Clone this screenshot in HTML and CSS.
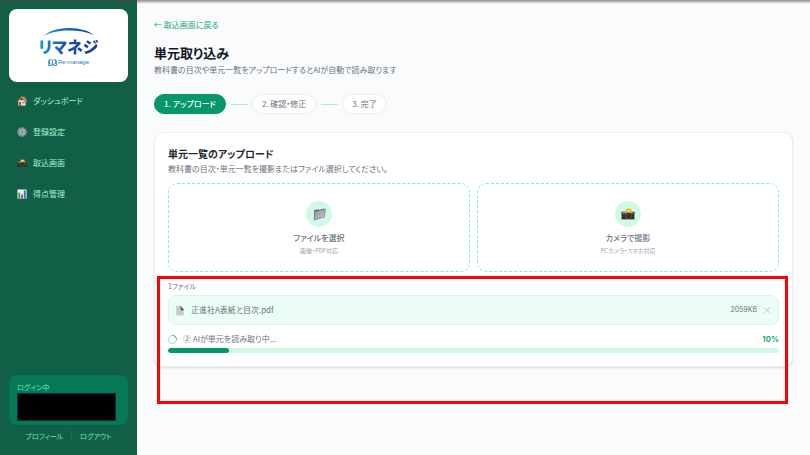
FILE: index.html
```html
<!DOCTYPE html>
<html lang="ja">

<head>
    <meta charset="UTF-8">
    <meta name="viewport" content="width=device-width, initial-scale=1.0">
    <title>単元取り込み</title>
    <link rel="stylesheet" href="styles.css">
</head>

<body>
    <!-- shared icons -->
    <svg class="defs" width="0" height="0" aria-hidden="true">
        <linearGradient id="blue" x1="0" x2="1" y1="0" y2="0">
            <stop offset="0" stop-color="#1696d2" />
            <stop offset="1" stop-color="#173a94" />
        </linearGradient>
        <linearGradient id="steel" x1="0" x2="1" y1="0" y2="1">
            <stop offset="0" stop-color="#8d939d" />
            <stop offset="1" stop-color="#c3c7ce" />
        </linearGradient>
        <symbol id="camera" viewBox="0 0 26 22">
            <path d="M1 7h24v14H1z" fill="#34302f" />
            <path d="M1 7h24v4H1z" fill="#5b5654" />
            <path d="M9 7l2-5h6l2 5z" fill="#4a4543" />
            <path d="M14 0l2 3 4-1-1 4 3 2-5 1-3 2-3-2-4-1 3-3-1-3 4 1z" fill="#ffb31a" />
            <circle cx="14" cy="5" r="2" fill="#fff0a0" />
            <circle cx="14" cy="14" r="6" fill="#55504f" />
            <circle cx="14" cy="14" r="4" fill="#24252b" />
            <circle cx="13" cy="13" r="1" fill="#8d96ac" />
            <path d="M3 8h4v2H3z" fill="#a39c98" />
        </symbol>
    </svg>

    <div class="layout">
        <aside class="sidebar">
            <div class="logo">
                <svg class="logo-arc" viewBox="0 0 52 8" aria-hidden="true">
                    <path d="M1 8C10-2 38-3 51 7C36 1 14 1 1 8z" fill="url(#blue)" />
                </svg>
                <span class="logo-name">リマネジ</span>
                <span class="logo-sub">
                    <svg class="logo-book" viewBox="0 0 18 14" aria-hidden="true">
                        <path d="M9 3C7 1 4 1 3 1v9c3 0 5 0 6 2c1-2 3-2 6-2V1c-1 0-4 0-6 2zM9 3v9M3 3H1v10h7M15 3h2v10h-7" fill="none" stroke="#217dbe" stroke-width="1.5" />
                    </svg>
                    Re:manage
                </span>
            </div>

            <nav>
                <ul class="menu">
                    <li>
                        <a href="#">
                            <svg class="menu-icon" viewBox="0 0 22 22" aria-hidden="true">
                                <path d="M3 9h16v12H3z" fill="#f6e6c4" />
                                <path d="M15 1h4v8h-4z" fill="#a65039" />
                                <path d="M0 11L9 1l12 10-2 2-10-8-7 8z" fill="#d0553f" />
                                <path d="M9 1l4 0 9 9-1 2z" fill="#e9a184" />
                                <path d="M5 13h4v8H5z" fill="#8c4a30" />
                                <path d="M12 12h5v5h-5z" fill="#6aa7ce" />
                            </svg>
                            ダッシュボード
                        </a>
                    </li>
                    <li>
                        <a href="#">
                            <svg class="menu-icon" viewBox="0 0 22 22" aria-hidden="true">
                                <circle cx="11" cy="11" r="9" fill="none" stroke="#a9adb8" stroke-width="3" stroke-dasharray="3 1.7" />
                                <circle cx="11" cy="11" r="7" fill="#777c88" stroke="#b6bac4" stroke-width="2" />
                                <path d="M11 4v14M4 11h14M6 6l10 10M16 6L6 16" stroke="#b6bac4" stroke-width="1" />
                                <circle cx="11" cy="11" r="3" fill="#50545e" stroke="#c9ccd4" stroke-width="2" />
                            </svg>
                            登録設定
                        </a>
                    </li>
                    <li>
                        <a href="#">
                            <svg class="menu-icon" aria-hidden="true"><use href="#camera" /></svg>
                            取込画面
                        </a>
                    </li>
                    <li>
                        <a href="#">
                            <svg class="menu-icon" viewBox="0 0 22 22" aria-hidden="true">
                                <path d="M1 1h20v20H1z" fill="#f2f5f7" />
                                <path d="M1 6h20M1 11h20M1 16h20" stroke="#cbd3da" />
                                <path d="M3 8h4v13H3z" fill="#2f9c4f" />
                                <path d="M9 12h4v9H9z" fill="#e03a3a" />
                                <path d="M15 3h4v18h-4z" fill="#2b6fd0" />
                            </svg>
                            得点管理
                        </a>
                    </li>
                </ul>
            </nav>

            <div class="account">
                <p class="account-label">ログイン中</p>
                <div class="account-name"></div>
            </div>
            <div class="account-links">
                <a href="#">プロフィール</a>
                <a href="#">ログアウト</a>
            </div>
        </aside>

        <main class="main">
            <a class="back" href="#">← 取込画面に戻る</a>
            <h1>単元取り込み</h1>
            <p class="lead">教科書の目次や単元一覧をアップロードするとAIが自動で読み取ります</p>

            <ol class="steps">
                <li class="step active">1. アップロード</li>
                <li class="step">2. 確認・修正</li>
                <li class="step">3. 完了</li>
            </ol>

            <div class="card-wrap">
                <section class="card">
                    <h2>単元一覧のアップロード</h2>
                    <p class="card-text">教科書の目次・単元一覧を撮影またはファイル選択してください。</p>

                    <div class="sources">
                        <button type="button" class="source">
                            <span class="source-icon">
                                <svg viewBox="0 0 26 26" aria-hidden="true">
                                    <path d="M4 6l8-2 1 2 10-3-1 15L4 24z" fill="#535963" />
                                    <path d="M5 8l20-4-2 15L4 24z" fill="url(#steel)" stroke="#686e79" />
                                </svg>
                            </span>
                            <span class="source-title">ファイルを選択</span>
                            <span class="source-note">画像・PDF対応</span>
                        </button>
                        <button type="button" class="source">
                            <span class="source-icon">
                                <svg aria-hidden="true"><use href="#camera" /></svg>
                            </span>
                            <span class="source-title">カメラで撮影</span>
                            <span class="source-note">PCカメラ・スマホ対応</span>
                        </button>
                    </div>

                    <p class="file-count">1ファイル</p>
                    <div class="file">
                        <svg class="file-icon" viewBox="0 0 20 22" aria-hidden="true">
                            <path d="M2 1h9l7 8v12H2z" fill="#d0d3d5" />
                            <path d="M10 1l8 9-6 1z" fill="#4a4c50" />
                            <path d="M4 6h5M4 9h5M4 12h11M4 15h11M4 18h11" stroke="#adb2b6" />
                        </svg>
                        <span class="file-name">正進社A表紙と目次.pdf</span>
                        <span class="file-size">2059KB</span>
                        <button type="button" class="file-remove" aria-label="削除">×</button>
                    </div>

                    <div class="status">
                        <span class="spinner"></span>
                        <label for="progress">② AIが単元を読み取り中...</label>
                        <span class="percent">10%</span>
                    </div>
                    <progress id="progress" class="progress" value="10" max="100"></progress>
                </section>
                <div class="highlight"></div>
            </div>
        </main>
    </div>
</body>

</html>
```

FILE: styles.css
```css
* {
    margin: 0;
    padding: 0;
    box-sizing: border-box;
}

body {
    font-family: "Noto Sans CJK JP", sans-serif;
    font-feature-settings: "palt";
    font-size: 8px;
    line-height: 12px;
    color: #6b7280;
    background: #fafbfd;
}

/* shadow under the window edge */
body::before {
    content: "";
    position: absolute;
    top: 0;
    left: 0;
    right: 0;
    height: 4px;
    background: linear-gradient(rgba(70, 70, 70, 0.6), rgba(90, 90, 90, 0));
}

a {
    color: inherit;
    text-decoration: none;
}

button {
    font: inherit;
    font-feature-settings: inherit;
    color: inherit;
    background: none;
    border: none;
    cursor: pointer;
}

ul,
ol {
    list-style: none;
}

.defs {
    position: absolute;
}

.layout {
    display: flex;
    min-height: 100vh;
}

/* sidebar */
.sidebar {
    display: flex;
    flex-direction: column;
    flex: none;
    width: 137px;
    padding: 9px 9px 14px;
    color: #a7f3d0;
    background: #115f46;
}

.logo {
    display: flex;
    flex-direction: column;
    align-items: center;
    padding: 19px 0 13px;
    border-radius: 8px;
    background: #fff;
}

.logo-arc {
    width: 52px;
    height: 8px;
}

.logo-name {
    font-size: 16px;
    font-weight: 900;
    line-height: 20px;
    color: transparent;
    background: linear-gradient(90deg, #1696d2, #1d4fa8 50%, #173a94);
    -webkit-background-clip: text;
    background-clip: text;
}

.logo-sub {
    display: flex;
    align-items: center;
    gap: 1px;
    font-family: "Liberation Sans", sans-serif;
    font-size: 6px;
    color: #217dbe;
    line-height: 13px;
}

.logo-book {
    width: 9px;
    height: 7px;
}

.menu {
    display: flex;
    flex-direction: column;
    gap: 7px;
    margin-top: 7px;
}

.menu a {
    display: flex;
    align-items: center;
    gap: 6px;
    height: 24px;
    padding: 0 8px;
}

.menu-icon {
    width: 10px;
    height: 10px;
}

.account {
    margin-top: auto;
    padding: 7px 8px 4px;
    border-radius: 8px;
    background: #047857;
}

.account-label {
    font-size: 7px;
    line-height: 11px;
    color: #6ee7b7;
}

.account-name {
    height: 28px;
    margin-right: 4px;
    border: 1px solid #04304a;
    background: #000;
}

.account-links {
    display: flex;
    justify-content: center;
    margin-top: 6px;
    font-size: 7px;
    line-height: 10px;
    color: #6ee7b7;
}

.account-links a {
    padding: 0 8px;
}

.account-links a + a {
    border-left: 1px solid #047857;
}

/* main */
.main {
    flex: 1;
    padding: 19px 17px;
}

.back {
    display: block;
    color: #10a877;
}

h1 {
    margin-top: 12px;
    font-size: 13px;
    line-height: 20px;
    color: #111827;
}

.lead {
    margin-top: 1px;
}

.steps {
    display: flex;
    gap: 26px;
    margin-top: 18px;
}

.step {
    position: relative;
    padding: 3px 9px;
    border: 1px solid #eceef2;
    border-radius: 10px;
    line-height: 12px;
    background: #fff;
}

.step + .step::before {
    content: "";
    position: absolute;
    top: 9px;
    left: -22px;
    width: 17px;
    height: 1px;
    background: #a7f3d0;
}

.step.active {
    color: #fff;
    font-weight: 500;
    border-color: #059669;
    background: #059669;
}

.card-wrap {
    position: relative;
    margin-top: 18px;
}

.card {
    padding: 14px 13px 13px;
    border: 1px solid #eceef2;
    border-radius: 9px;
    background: #fff;
    box-shadow: 0 1px 2px rgba(0, 0, 0, 0.12);
}

h2 {
    font-size: 10px;
    line-height: 14px;
    color: #1f2937;
}

.card-text {
    margin-top: 2px;
}

.sources {
    display: grid;
    grid-template-columns: 1fr 1fr;
    gap: 7px;
    margin-top: 8px;
}

.source {
    display: flex;
    flex-direction: column;
    align-items: center;
    padding: 17px 0 14px;
    border: 1px dashed #86efc0;
    border-radius: 9px;
}

.source-icon {
    display: flex;
    align-items: center;
    justify-content: center;
    width: 26px;
    height: 26px;
    border-radius: 50%;
    background: #d1fae5;
}

.source-icon svg {
    width: 14px;
    height: 14px;
}

.source-title {
    margin-top: 5px;
    font-weight: 500;
}

.source-note {
    margin-top: 1px;
    font-size: 6px;
    color: #9ca3af;
}

.file-count {
    margin-top: 8px;
    font-size: 7px;
}

.file {
    display: flex;
    align-items: center;
    height: 30px;
    margin-top: 3px;
    padding: 0 6px;
    border: 1px solid #d1fae5;
    border-radius: 8px;
    background: #ecfdf5;
}

.file-icon {
    width: 10px;
    height: 11px;
    margin-right: 6px;
}

.file-size {
    margin-left: auto;
    font-family: Inter, sans-serif;
    font-size: 7px;
}

.file-remove {
    margin-left: 5px;
    font-size: 10px;
    color: #c5ccd2;
}

.status {
    display: flex;
    align-items: center;
    margin-top: 8px;
}

.spinner {
    width: 9px;
    height: 9px;
    margin-right: 6px;
    border: 1px solid #86e5bd;
    border-top-color: #059669;
    border-radius: 50%;
    transform: rotate(45deg);
}

.percent {
    margin-left: auto;
    font-family: Inter, sans-serif;
    font-weight: 600;
    color: #10a06f;
}

.progress {
    display: block;
    width: 100%;
    height: 5px;
    margin-top: 3px;
    border: none;
    border-radius: 3px;
    overflow: hidden;
    appearance: none;
    -webkit-appearance: none;
    background: #d1fae5;
}

.progress::-webkit-progress-bar {
    background: #d1fae5;
}

.progress::-webkit-progress-value {
    border-radius: 3px;
    background: #059669;
}

/* red frame over the upload status */
.highlight {
    position: absolute;
    top: 144px;
    left: 3px;
    right: 5px;
    height: 128px;
    border: 3px solid #f00;
    pointer-events: none;
}
```
